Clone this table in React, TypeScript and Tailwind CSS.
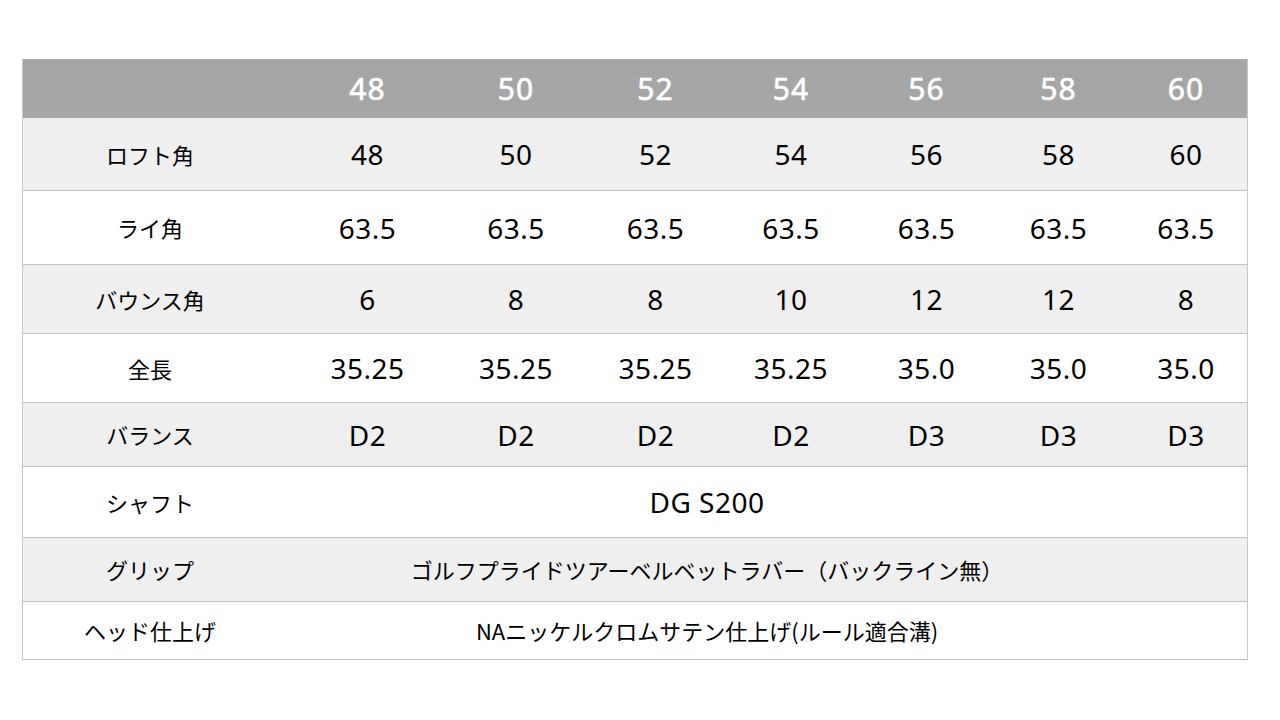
import React from "react";

const cols = "grid grid-cols-[268px_153px_144px_135px_136px_135px_129px_126px]";
const jp = { fontFamily: '"Noto Sans CJK JP", sans-serif' };
const num = { fontFamily: '"Noto Sans", "Noto Sans CJK JP", sans-serif' };

type Row = { label: string; values?: string[]; span?: string; h: string; bg: string };

const rows: Row[] = [
  { label: "ロフト角", values: ["48", "50", "52", "54", "56", "58", "60"], h: "h-[73px]", bg: "bg-[#efefef]" },
  { label: "ライ角", values: ["63.5", "63.5", "63.5", "63.5", "63.5", "63.5", "63.5"], h: "h-[74px]", bg: "bg-white" },
  { label: "バウンス角", values: ["6", "8", "8", "10", "12", "12", "8"], h: "h-[69px]", bg: "bg-[#efefef]" },
  { label: "全長", values: ["35.25", "35.25", "35.25", "35.25", "35.0", "35.0", "35.0"], h: "h-[69px]", bg: "bg-white" },
  { label: "バランス", values: ["D2", "D2", "D2", "D2", "D3", "D3", "D3"], h: "h-[64px]", bg: "bg-[#efefef]" },
  { label: "シャフト", span: "DG S200", h: "h-[71px]", bg: "bg-white" },
  { label: "グリップ", span: "ゴルフプライドツアーベルベットラバー（バックライン無）", h: "h-[64px]", bg: "bg-[#efefef]" },
  { label: "ヘッド仕上げ", span: "NAニッケルクロムサテン仕上げ(ルール適合溝)", h: "h-[58px]", bg: "bg-white" },
];

export default function App() {
  return (
    <div className="w-[1280px] h-[720px] bg-white pt-[59px] pl-[22px]">
      <div className="w-[1226px] border-x border-[#c8c8c8]">
        <div className={`${cols} h-[59px] bg-[#a6a6a6]`}>
          <div />
          {["48", "50", "52", "54", "56", "58", "60"].map((v, i) => (
            <div
              key={i}
              className="flex items-center justify-center text-white text-[30px] tracking-[1px] [-webkit-text-stroke:0.6px_white]"
              style={num}
            >
              {v}
            </div>
          ))}
        </div>
        {rows.map((r, ri) => (
          <div key={ri} className={`${cols} ${r.h} ${r.bg} border-b border-[#bfbfbf]`}>
            <div className="flex items-center justify-center pr-[14px] text-[22px] text-black" style={jp}>
              {r.label}
            </div>
            {r.values ? (
              r.values.map((v, i) => (
                <div key={i} className="flex items-center justify-center text-[28px] text-black tracking-[0.5px]" style={num}>
                  {v}
                </div>
              ))
            ) : (
              <>
                <div
                  className={`col-span-6 flex items-center justify-center text-black ${r.span === "DG S200" ? "text-[28px] tracking-[0.5px]" : "text-[22px]"}`}
                  style={r.span === "DG S200" ? num : jp}
                >
                  {r.span}
                </div>
                <div />
              </>
            )}
          </div>
        ))}
      </div>
    </div>
  );
}
